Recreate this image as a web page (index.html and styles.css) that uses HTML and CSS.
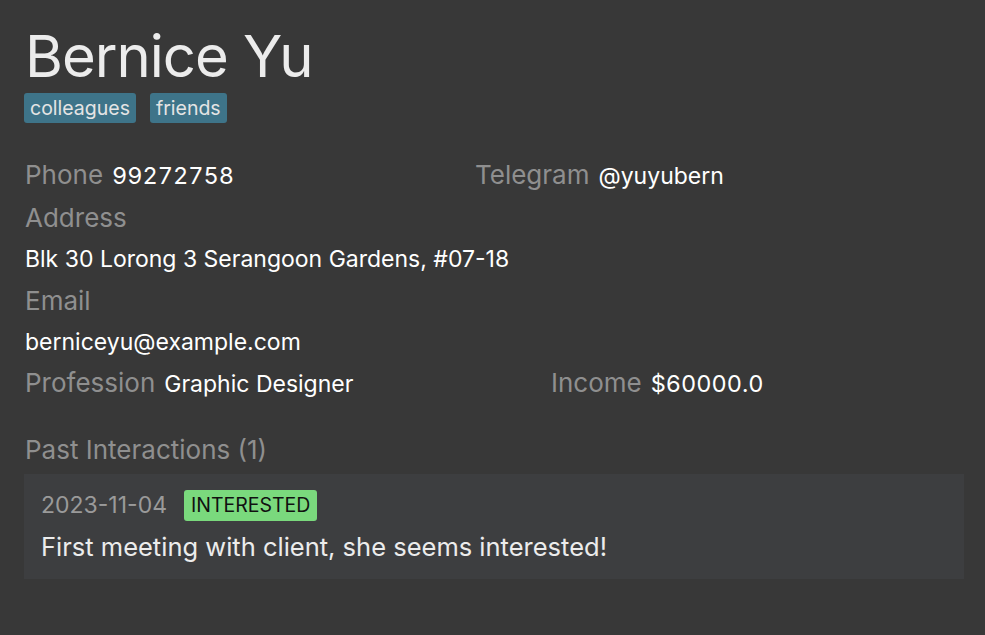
FILE: index.html
```html
<!DOCTYPE html>
<html>
<head>
<meta charset="utf-8">
<link rel="stylesheet" href="styles.css">
</head>
<body>
<div class="page">
  <h1 class="name">Bernice Yu</h1>
  <div class="tags">
    <span class="tag">colleagues</span>
    <span class="tag">friends</span>
  </div>
  <div class="row row-phone">
    <div class="field"><span class="label">Phone</span><span class="value num">99272758</span></div>
    <div class="field"><span class="label">Telegram</span><span class="value">@yuyubern</span></div>
  </div>
  <div class="block">
    <div class="label">Address</div>
    <div class="value">Blk 30 Lorong 3 Serangoon Gardens, #07-18</div>
  </div>
  <div class="block">
    <div class="label">Email</div>
    <div class="value">berniceyu@example.com</div>
  </div>
  <div class="row row-prof">
    <div class="field"><span class="label">Profession</span><span class="value">Graphic Designer</span></div>
    <div class="field"><span class="label">Income</span><span class="value num">$60000.0</span></div>
  </div>
  <div class="section-title">Past Interactions (1)</div>
  <div class="card">
    <div class="card-head">
      <span class="date">2023-11-04</span>
      <span class="badge">INTERESTED</span>
    </div>
    <div class="note">First meeting with client, she seems interested!</div>
  </div>
</div>
</body>
</html>
```
FILE: styles.css
```css
html, body {
  margin: 0;
  padding: 0;
  background: #383838;
}
body {
  font-family: Inter, "Noto Sans", sans-serif;
  width: 985px;
  height: 635px;
  overflow: hidden;
}
.page {
  padding: 20px 21px 0 24px;
}
.name {
  margin: 0;
  font-weight: 400;
  font-size: 58px;
  line-height: 72px;
  color: #ececec;
  letter-spacing: -1px;
  padding-left: 1px;
}
.tags {
  display: flex;
  gap: 14px;
  margin-top: 1px;
}
.tag {
  background: #3e7489;
  color: #e4e4e4;
  font-size: 19.5px;
  line-height: 30px;
  height: 30px;
  padding: 0 6px;
  border-radius: 3px;
}
.row {
  display: grid;
  padding-left: 1px;
}
.field {
  display: flex;
  align-items: baseline;
  gap: 9px;
}
.row-phone {
  grid-template-columns: 450px 1fr;
  margin-top: 37px;
}
.row-prof {
  grid-template-columns: 526px 1fr;
  margin-top: 11px;
}
.label {
  color: #8f8f8f;
  font-size: 26px;
  line-height: 30px;
}
.value {
  color: #ffffff;
  font-size: 23px;
  line-height: 30px;
}
.num {
  font-variant-numeric: tabular-nums;
  font-size: 23.5px;
}
.block {
  padding-left: 1px;
  margin-top: 12px;
}
.block .value {
  margin-top: 11px;
}
.section-title {
  margin-top: 36px;
  color: #8f8f8f;
  font-size: 26px;
  line-height: 30px;
  padding-left: 1px;
}
.card {
  margin-top: 9px;
  background: #3d3e40;
  height: 105px;
  box-sizing: border-box;
  padding: 16px 17px 0 17px;
}
.card-head {
  display: flex;
  align-items: center;
  gap: 17px;
}
.date {
  color: #9a9a9a;
  font-size: 23px;
  line-height: 31px;
}
.badge {
  background: #7ad97d;
  color: #111;
  font-size: 19.5px;
  line-height: 31px;
  padding: 0 7px;
  border-radius: 3px;
}
.note {
  margin-top: 11px;
  color: #ececec;
  font-size: 25.5px;
  line-height: 30px;
}
```
